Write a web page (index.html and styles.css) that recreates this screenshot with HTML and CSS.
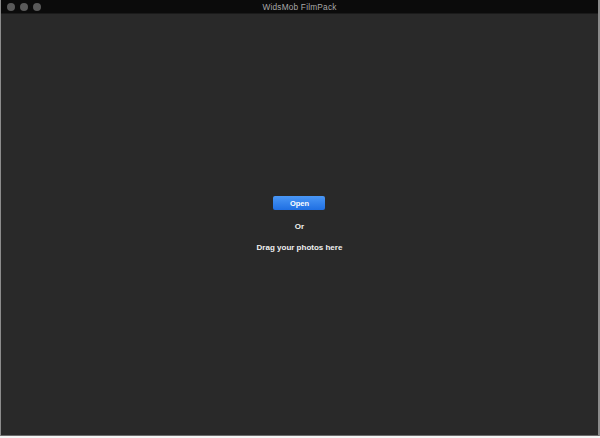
FILE: index.html
```html
<!DOCTYPE html>
<html lang="en">
<head>
    <meta charset="UTF-8">
    <meta name="viewport" content="width=device-width, initial-scale=1.0">
    <title>WidsMob FilmPack</title>
    <link rel="stylesheet" href="styles.css">
</head>
<body>
    <div class="window">
        <div class="titlebar">
            <div class="traffic">
                <span class="dot"></span>
                <span class="dot"></span>
                <span class="dot"></span>
            </div>
            <div class="title">WidsMob FilmPack</div>
        </div>
        <div class="content">
            <div class="drop-zone">
                <button class="open-btn">Open</button>
                <p class="drop-text">Or</p>
                <p class="drop-text">Drag your photos here</p>
            </div>
        </div>
    </div>
</body>
</html>
```

FILE: styles.css
```css
* {
    box-sizing: border-box;
    margin: 0;
    padding: 0;
    font-family: 'Liberation Sans', Arial, sans-serif;
}

body {
    background-color: #f4f4f4;
    width: 600px;
    height: 438px;
    overflow: hidden;
}

.window {
    width: 600px;
    height: 436px;
    display: flex;
    flex-direction: column;
    border-left: 1px solid #8c8c8c;
    border-right: 2px solid #8c8c8c;
    border-bottom: 1px solid #6a6a6a;
    background-color: #292929;
}

.titlebar {
    height: 14px;
    background-color: #0b0b0b;
    position: relative;
    display: flex;
    align-items: center;
    justify-content: center;
    border-bottom: 1px solid #1a1a1a;
}

.traffic {
    position: absolute;
    left: 6px;
    top: 3px;
    display: flex;
    gap: 5px;
}

.dot {
    width: 8px;
    height: 8px;
    border-radius: 50%;
    background-color: #5a5a5a;
}

.title {
    color: #a8a8a8;
    font-size: 8.3px;
    letter-spacing: 0.2px;
}

.content {
    flex: 1;
    display: flex;
    justify-content: center;
    align-items: center;
    padding-top: 10px;
}

.drop-zone {
    display: flex;
    flex-direction: column;
    align-items: center;
}

.open-btn {
    width: 52px;
    height: 14px;
    border: none;
    border-radius: 2px;
    background: linear-gradient(#4a97f5, #1f6fe3);
    color: #fff;
    font-size: 7.5px;
    font-weight: bold;
    margin-bottom: 11px;
}

.drop-text {
    color: #f0f0f0;
    font-size: 8px;
    font-weight: bold;
    line-height: 11px;
    margin-bottom: 10px;
}
```
